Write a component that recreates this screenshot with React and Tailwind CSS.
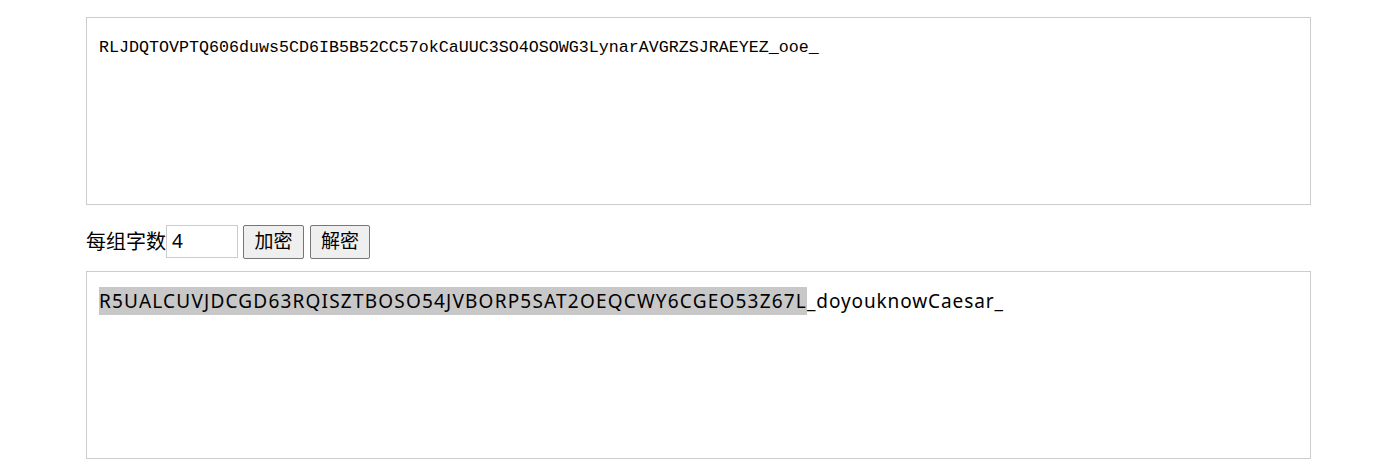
export default function App() {
  return (
    <div className="min-h-[474px] bg-white pl-[86px] pt-[17px] text-black">
      {/* plaintext box */}
      <div className="h-[188px] w-[1225px] border border-[#cccccc] px-[12px] pt-[20px]">
        <p className="font-['Liberation_Mono',monospace] text-[16.67px] leading-[20px] text-black">
          RLJDQTOVPTQ606duws5CD6IB5B52CC57okCaUUC3SO4OSOWG3LynarAVGRZSJRAEYEZ_ooe_
        </p>
      </div>

      {/* controls */}
      <div className="mt-[19px] flex h-[35px] items-center font-['Noto_Sans','Noto_Sans_CJK_SC',sans-serif]">
        <span className="text-[20px] leading-none">每组字数</span>
        <div className="flex h-[33px] w-[72px] items-center border border-[#cccccc] px-[5px] text-[19px] leading-none">4</div>
        <button className="ml-[5px] h-[34px] w-[61px] rounded-[2px] border border-[#767676] bg-[#efefef] text-[19px] leading-none">加密</button>
        <button className="ml-[6px] h-[34px] w-[60px] rounded-[2px] border border-[#767676] bg-[#efefef] text-[19px] leading-none">解密</button>
      </div>

      {/* ciphertext box */}
      <div className="mt-[12px] h-[188px] w-[1225px] border border-[#cccccc] px-[12px] pt-[15px]">
        <p className="font-['Noto_Sans','Noto_Sans_CJK_SC',sans-serif] text-[19px] leading-[28px] text-black">
          <span className="bg-[#c8c8c8] py-[1px] tracking-[1.2px]">R5UALCUVJDCGD63RQISZTBOSO54JVBORP5SAT2OEQCWY6CGEO53Z67L</span>
          <span className="tracking-[0.9px]">_doyouknowCaesar_</span>
        </p>
      </div>
    </div>
  );
}
